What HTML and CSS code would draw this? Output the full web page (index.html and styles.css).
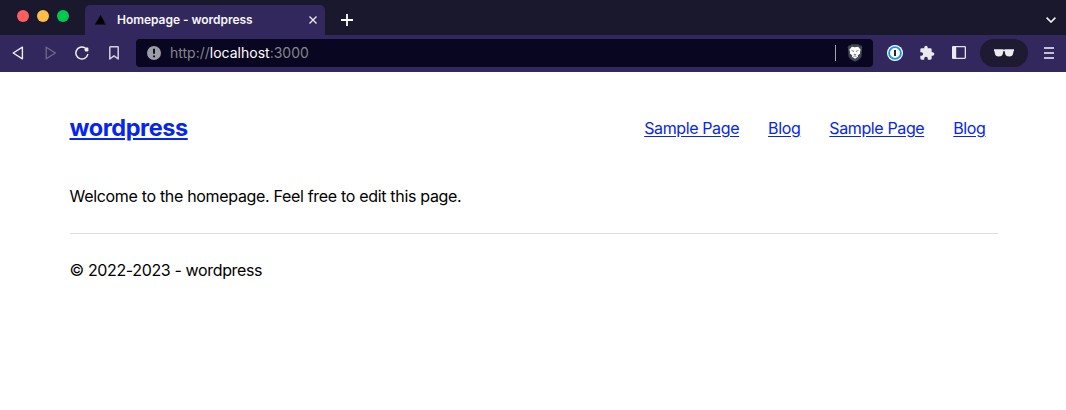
FILE: index.html
```html
<!DOCTYPE html>
<html lang="en">
<head>
<meta charset="utf-8">
<title>Homepage - wordpress</title>
<link rel="stylesheet" href="styles.css">
</head>
<body>
<div class="browser">
  <div class="tabstrip">
    <div class="lights"><i class="light red"></i><i class="light yellow"></i><i class="light green"></i></div>
    <div class="tab">
      <svg class="favicon" width="12" height="12" viewBox="0 0 12 12"><path d="M5.5 1 11 10.500H0z" fill="#000"/><path d="M8.500 10.500H11L9.300 7.600z" fill="#1c1921"/></svg>
      <span class="tab-title">Homepage - wordpress</span>
      <svg class="tab-close" width="8" height="8" viewBox="0 0 8 8"><path d="M.5.5l7 7M7.5.5l-7 7" stroke="#eeecf4" stroke-width="1.3"/></svg>
    </div>
    <svg class="new-tab" width="12" height="12" viewBox="0 0 12 12"><path d="M6 0v12M0 6h12" stroke="#fff" stroke-width="1.8"/></svg>
    <svg class="tab-search" width="10" height="6" viewBox="0 0 10 6"><path d="M.6.6 5 5 9.4.6" fill="none" stroke="#f2f1f5" stroke-width="1.6"/></svg>
  </div>
  <div class="toolbar">
    <svg class="back" width="12" height="14" viewBox="0 0 12 14"><path d="M10.4 1.2v11.6L1.2 7z" fill="none" stroke="#f1eff7" stroke-width="1.4" stroke-linejoin="round"/></svg>
    <svg class="forward" width="12" height="14" viewBox="0 0 12 14"><path d="M1.2 1.2v11.6L10.4 7z" fill="none" stroke="#716990" stroke-width="1.3" stroke-linejoin="round"/></svg>
    <svg class="reload" width="14" height="14" viewBox="0 0 14 14"><path d="M10 1.900A6 6 0 1 0 12.7 8.6" fill="none" stroke="#f1eff7" stroke-width="1.5" stroke-linecap="round"/><path d="M12.600 2.400V4.800H10.800L10.200 3.500 11 2.400z" fill="#f1eff7" stroke="#f1eff7" stroke-width="1.600" stroke-linejoin="round"/></svg>
    <svg class="bookmark" width="10" height="14" viewBox="0 0 10 14"><path d="M.8 1.3Q.8.8 1.3.8H8.7Q9.2.8 9.2 1.3V13L5 9.8.8 13z" fill="none" stroke="#d2cfdd" stroke-width="1.5" stroke-linejoin="round"/></svg>
    <div class="address">
      <svg width="14" height="14" viewBox="0 0 14 14"><circle cx="7" cy="7" r="7" fill="#9b9ea3"/><path d="M7 2.7v5.1M7 9.4v1.9" stroke="#080620" stroke-width="1.9"/></svg>
      <span class="url">http://<b>localhost</b>:3000</span>
      <i class="divider"></i>
      <svg class="shield" width="16" height="18" viewBox="0 0 16 18"><path d="M3.1 1.5 4.6.3h6.8l1.5 1.2 1.5-.1 1 2.1-.4 1.2-.5 7.6c-.2 2-3 3.8-6.5 5.5-3.500-1.700-6.300-3.500-6.500-5.500L1 4.700.600 3.500l1-2.100z" fill="#444653"/><path d="M4.900 2.700 8 3.200l3.100-.500 2.600 3-.800 2.200.300 1.600-2.400 1.700.200 1.600L8 14.700l-3-1.900.200-1.600-2.400-1.700.300-1.600-.800-2.200z" fill="#fff"/><path d="M4.500 6.500 6.700 7.100 6.500 8.100M11.500 6.500 9.300 7.100l.200 1M6.800 10.400h2.400L8 11.300zM6.500 12.600 8 12l1.500.600" fill="none" stroke="#5c5e69" stroke-width=".7"/></svg>
    </div>
    <svg class="onepass" width="16" height="16" viewBox="0 0 16 16"><circle cx="8" cy="8" r="8" fill="#fff"/><circle cx="8" cy="8" r="5.900" fill="#fff" stroke="#1593f5" stroke-width="1.900"/><path d="M7 5h2v6H7z" fill="#25262e"/></svg>
    <svg class="puzzle" width="16" height="16" viewBox="0 0 24 24"><path d="M20.500 11H19V7a2 2 0 0 0-2-2h-4V3.500a2.500 2.500 0 0 0-5 0V5H4a2 2 0 0 0-2 2v3.800h1.500a2.700 2.700 0 0 1 0 5.400H2V20a2 2 0 0 0 2 2h3.800v-1.500a2.700 2.700 0 0 1 5.400 0V22H17a2 2 0 0 0 2-2v-4h1.500a2.500 2.500 0 0 0 0-5z" fill="#ebeaf0"/></svg>
    <svg class="sidebar" width="14" height="13" viewBox="0 0 14 13"><rect x=".65" y=".65" width="12.700" height="11.700" rx=".8" fill="none" stroke="#e4e2ea" stroke-width="1.300"/><path d="M0 .5h4.200v12H0z" fill="#eceaf1"/></svg>
    <div class="profile"><svg width="20" height="8" viewBox="0 0 20 8"><path d="M0 .200H8.700L10 .800 11.300.200H20V2L19.500 2.300 19 5.300Q18.400 7.500 15.300 7.500 12 7.500 11.200 5L10.700 2.300Q10 1.900 9.300 2.300L8.800 5Q8 7.500 4.700 7.500 1.600 7.500 1 5.300L.5 2.300 0 2z" fill="#ebeaed"/></svg></div>
    <svg class="menu" width="10" height="12" viewBox="0 0 10 12"><path d="M0 1h10M0 6h10M0 11h10" stroke="#c5c1d2" stroke-width="2"/></svg>
  </div>
</div>
<div class="page">
  <header class="site-header">
    <a class="brand" href="#">wordpress</a>
    <nav class="nav"><a href="#">Sample Page</a><a href="#">Blog</a><a href="#">Sample Page</a><a href="#">Blog</a></nav>
  </header>
  <main class="content"><p class="welcome">Welcome to the homepage. Feel free to edit this page.</p></main>
  <footer class="site-footer"><span class="copyright">© 2022-2023 - wordpress</span></footer>
</div>
</body>
</html>
```

FILE: styles.css
```css
* { box-sizing: border-box; }
body { margin: 0; height: 410px; overflow: hidden; background: #fff; color: #000; font: 16px/24px Inter, "Liberation Sans", sans-serif; }
svg { display: block; flex: none; }
.browser { background: #1a182c; }
.tabstrip { display: flex; height: 35px; align-items: center; padding-right: 10px; }
.lights { display: flex; gap: 8px; width: 85px; padding: 0 0 3px 17px; }
.light { width: 12px; height: 12px; border-radius: 50%; }
.red { background: #ff5f5c; }
.yellow { background: #ffbd4a; }
.green { background: #00ca4e; }
.tab { display: flex; align-items: center; width: 240px; height: 30px; margin-top: 5px; padding: 0 8px 0 10px; border-radius: 5px 5px 0 0; background: #32285d; }
.tab-title { margin-left: 10px; color: #f7f6fa; font-size: 12px; font-weight: 600; line-height: 18px; letter-spacing: -.04px; white-space: nowrap; }
.tab-close { margin-left: auto; }
.new-tab { margin: 5px 0 0 16px; }
.tab-search { margin: 5px 0 0 auto; }
.toolbar { display: flex; align-items: center; height: 37px; padding: 0 12px 2px; background: #32285d; }
.forward { margin-left: 21px; }
.reload { margin-left: 18px; }
.bookmark { margin-left: 20px; }
.address { display: flex; align-items: center; width: 737px; height: 28px; margin-left: 17px; padding: 0 10px 0 11px; border-radius: 4px; background: #080620; }
.url { margin-left: 9px; color: #85848f; font-size: 14px; line-height: 20px; white-space: nowrap; }
.url b { color: #fff; font-weight: 400; }
.divider { width: 1px; height: 16px; margin-left: auto; background: #a5a4ae; }
.shield { margin-left: 11px; }
.onepass { margin-left: 14px; }
.puzzle { margin-left: 16px; }
.sidebar { margin-left: 17px; }
.profile { display: flex; align-items: center; justify-content: center; width: 48px; height: 28px; margin-left: 14px; border-radius: 14px; background: #1d1a32; }
.menu { margin-left: 16px; }
.page { width: 928.5px; margin-left: 69.5px; letter-spacing: -.32px; }
.site-header { display: flex; align-items: center; justify-content: space-between; height: 112px; padding-right: 12.5px; }
a { color: #0525f0; text-underline-offset: 2px; }
.brand { font-size: 23.5px; font-weight: 700; line-height: 32px; letter-spacing: -.42px; }
.nav { display: flex; gap: 29px; letter-spacing: -.38px; }
.content { height: 49px; }
.welcome { margin: 0; }
.site-footer { padding-top: 24px; border-top: 1px solid #dedede; }
.copyright { letter-spacing: -.36px; }
```
